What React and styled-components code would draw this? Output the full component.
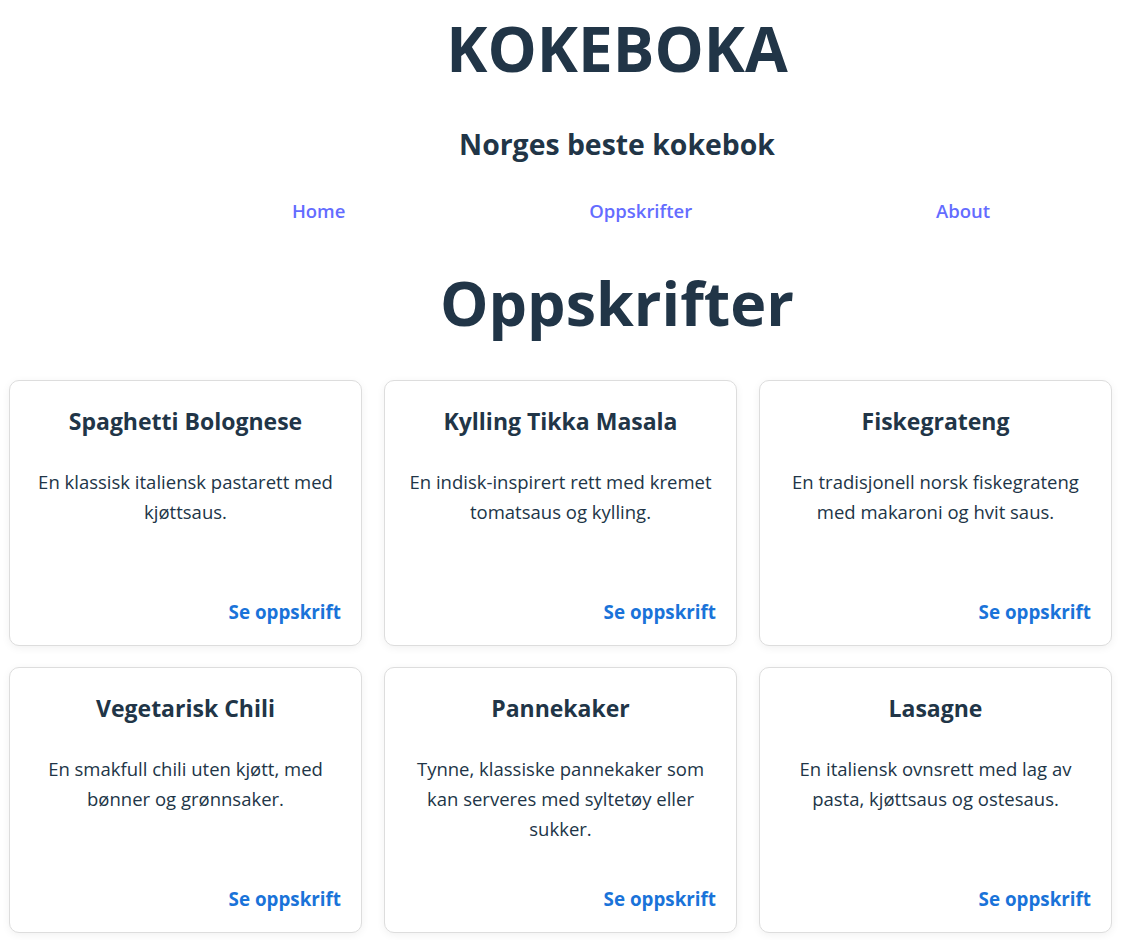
import React from 'react'
import styled, { createGlobalStyle } from 'styled-components'

const GlobalStyle = createGlobalStyle`
    body {
        margin: 0;
        background: #ffffff;
        color: #213547;
        font-family: 'Open Sans', 'Noto Sans', sans-serif;
    }
`

const Header = styled.header`
    text-align: center;
`

const SiteTitle = styled.h1`
    margin: 0;
    padding: 6px 0 0 107px;
    font-size: 62px;
    line-height: 84px;
    font-weight: 700;
    color: #213547;
`

const Tagline = styled.h2`
    margin: 34px 0 0;
    padding-left: 107px;
    font-size: 28.4px;
    line-height: 40px;
    font-weight: 700;
`

const Nav = styled.nav`
    display: flex;
    justify-content: space-around;
    width: 942px;
    margin: 34px 0 0 170px;
`

const NavLink = styled.a`
    color: #646cff;
    font-size: 18.5px;
    font-weight: 600;
    text-decoration: none;
`

const PageTitle = styled.h1`
    margin: 38px 0 0;
    padding-left: 107px;
    text-align: center;
    font-size: 61px;
    line-height: 84px;
    font-weight: 700;
`

const Grid = styled.main`
    display: grid;
    grid-template-columns: repeat(3, 1fr);
    gap: 21px 22px;
    padding: 35px 15px 8px 9px;
`

const Card = styled.article`
    display: flex;
    flex-direction: column;
    height: 266px;
    box-sizing: border-box;
    padding: 24px 20px 20px;
    border: 1px solid #dddddd;
    border-radius: 10px;
    background: #ffffff;
    box-shadow: 0 2px 8px rgba(0, 0, 0, 0.06);
    text-align: center;
`

const CardTitle = styled.h3`
    margin: 0;
    font-size: 23px;
    line-height: 32px;
    font-weight: 700;
`

const CardText = styled.p`
    margin: 30px 0 0;
    flex: 1;
    font-size: 18.5px;
    line-height: 30px;
`

const CardLink = styled.a`
    align-self: flex-end;
    color: #1a73d9;
    font-size: 18.8px;
    font-weight: 700;
    text-decoration: none;
`

const recipes = [
    { title: 'Spaghetti Bolognese', text: 'En klassisk italiensk pastarett med kjøttsaus.' },
    { title: 'Kylling Tikka Masala', text: 'En indisk-inspirert rett med kremet tomatsaus og kylling.' },
    { title: 'Fiskegrateng', text: 'En tradisjonell norsk fiskegrateng med makaroni og hvit saus.' },
    { title: 'Vegetarisk Chili', text: 'En smakfull chili uten kjøtt, med bønner og grønnsaker.' },
    { title: 'Pannekaker', text: 'Tynne, klassiske pannekaker som kan serveres med syltetøy eller sukker.' },
    { title: 'Lasagne', text: 'En italiensk ovnsrett med lag av pasta, kjøttsaus og ostesaus.' },
]

const App = () => (
    <>
        <GlobalStyle />
        <Header>
            <SiteTitle>KOKEBOKA</SiteTitle>
            <Tagline>Norges beste kokebok</Tagline>
            <Nav>
                <NavLink href="#">Home</NavLink>
                <NavLink href="#">Oppskrifter</NavLink>
                <NavLink href="#">About</NavLink>
            </Nav>
        </Header>
        <PageTitle>Oppskrifter</PageTitle>
        <Grid>
            {recipes.map(r => (
                <Card key={r.title}>
                    <CardTitle>{r.title}</CardTitle>
                    <CardText>{r.text}</CardText>
                    <CardLink href="#">Se oppskrift</CardLink>
                </Card>
            ))}
        </Grid>
    </>
)

export default App
